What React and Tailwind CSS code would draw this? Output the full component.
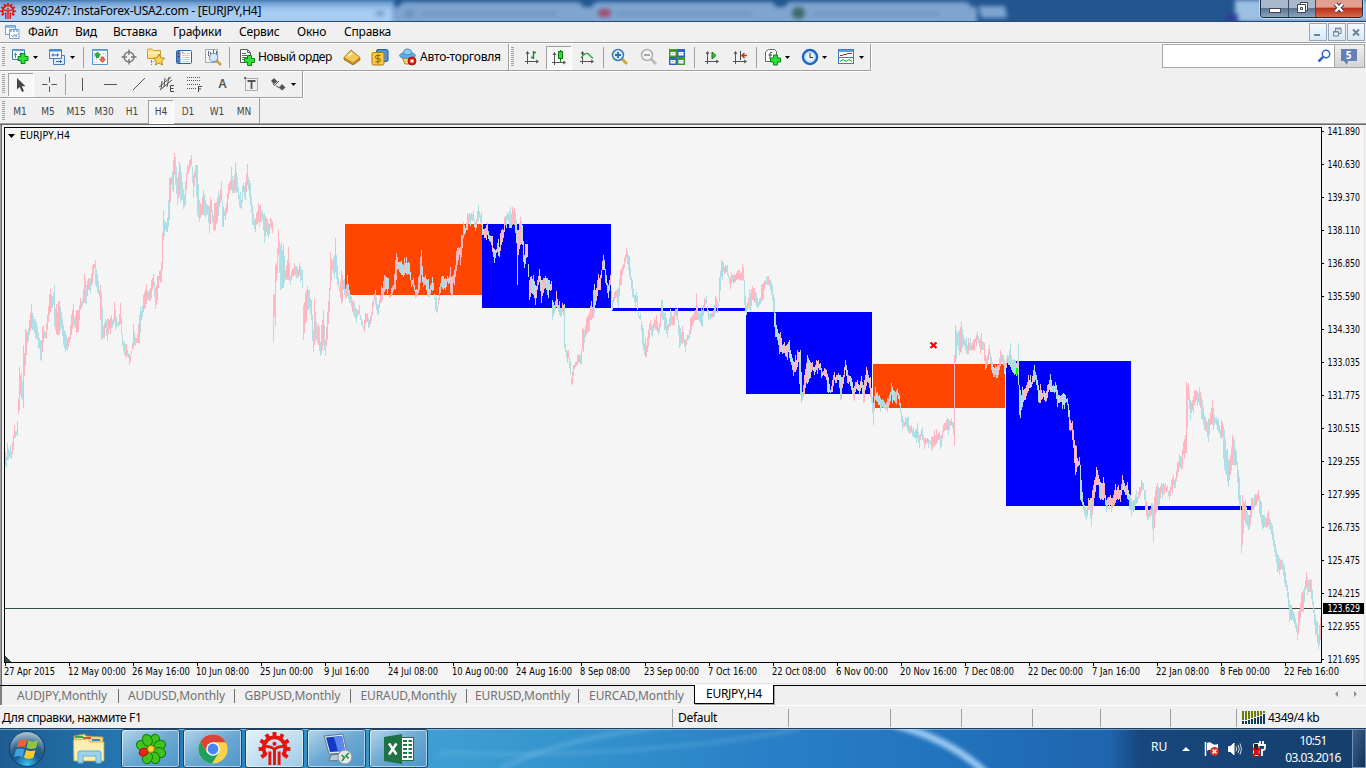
import React from 'react';

// x high low, in chart pixels
const BARS = `5 452 466,6 457 468,7 443 460,9 451 457,11 451 459,13 435 450,14 425 438,16 431 435,17 421 436,18 399 414,19 367 410,20 375 395,22 381 400,23 345 408,24 353 376,25 329 366,27 332 343,29 320 335,31 304 328,33 316 330,35 319 338,37 327 340,39 338 348,41 341 361,43 325 342,45 332 338,47 315 330,49 294 315,51 295 308,53 292 305,54 285 327,55 308 330,57 312 335,59 301 335,61 312 328,63 325 345,65 332 352,67 339 350,69 337 343,71 315 335,73 304 325,74 318 327,76 310 333,78 310 332,80 298 310,82 299 306,84 274 303,86 285 304,88 278 290,90 278 293,92 266 283,94 264 268,95 260 285,97 274 293,99 290 297,101 292 340,103 326 338,105 319 328,107 318 341,109 320 329,111 315 328,113 318 325,114 302 322,116 317 327,118 322 327,120 303 324,122 334 346,124 342 355,126 344 358,128 353 358,130 355 362,132 343 350,133 324 348,135 337 346,137 334 343,139 315 343,141 311 320,143 295 312,145 289 308,147 291 300,149 290 301,151 280 298,153 274 286,155 288 309,157 276 300,159 271 280,161 262 283,162 233 270,163 211 240,165 222 230,167 218 232,169 178 220,171 177 185,173 160 192,174 153 175,175 157 185,177 178 205,179 162 195,180 165 202,182 182 200,184 195 207,185 182 205,187 165 175,189 160 170,191 155 165,193 175 198,195 165 178,197 165 215,199 200 222,201 205 215,203 190 214,205 200 218,207 205 215,209 206 233,211 200 212,213 215 230,215 203 230,217 198 222,219 195 207,221 181 200,222 200 227,224 211 216,226 203 214,228 184 199,230 180 190,231 167 190,233 180 193,235 163 191,237 177 192,239 195 207,241 200 209,243 183 192,245 182 200,247 164 185,248 177 190,250 183 205,252 205 225,254 220 229,256 213 225,258 203 222,260 205 222,262 210 220,264 213 243,266 218 232,268 223 238,270 218 227,272 221 233,273 294 343,274 295 317,275 265 326,276 263 281,278 230 255,280 245 290,282 250 288,283 244 288,285 270 280,287 260 280,288 247 280,290 276 285,292 268 277,294 263 275,296 266 278,298 270 277,299 263 275,302 270 288,303 305 340,305 293 323,307 286 310,309 290 308,311 300 320,313 330 352,314 299 345,316 322 340,318 324 345,320 342 356,322 320 350,323 310 345,325 340 356,327 312 340,329 288 312,330 252 290,332 260 270,334 255 278,335 238 272,337 265 285,339 286 292,341 270 304,343 280 290,345 289 298,347 275 296,349 290 303,351 296 307,353 300 315,355 308 319,357 310 317,359 305 315,361 318 325,363 326 329,365 313 325,367 313 322,368 318 328,370 316 324,372 302 315,374 294 300,376 297 310,378 305 315,380 295 303,382 288 300,384 275 292,386 277 289,388 278 289,389 295 298,391 288 296,393 285 291,395 260 290,397 257 270,399 262 272,401 260 275,403 265 277,405 263 273,407 263 275,409 263 275,411 280 287,413 278 287,415 290 298,417 290 296,419 275 290,421 250 275,423 277 287,425 275 285,427 280 296,429 289 297,431 283 290,433 283 290,435 298 310,437 306 313,439 287 300,441 277 287,443 276 290,445 278 290,447 276 282,449 276 283,450 267 293,451 277 297,453 275 283,455 265 277,457 248 265,459 248 255,460 247 265,462 235 248,463 222 238,465 228 233,467 213 230,469 213 222,471 213 220,473 211 220,475 222 231,477 211 222,479 211 218,481 212 225,482 224 235,484 229 238,486 225 240,487 223 235,489 235 241,491 236 245,493 248 257,495 250 258,497 243 252,499 247 257,501 230 245,503 230 238,505 216 225,507 212 220,509 211 228,511 214 228,512 207 225,514 208 225,516 220 243,517 230 285,518 230 255,520 217 245,522 225 245,524 255 268,526 244 258,527 244 257,529 280 300,531 276 293,533 275 295,535 285 305,537 280 290,539 269 282,541 280 303,543 278 293,545 276 288,547 278 295,549 280 290,551 281 290,552 300 320,554 305 313,556 291 307,558 305 312,560 308 317,562 303 312,563 305 315,564 304 348,565 344 352,566 350 358,568 350 358,570 361 375,571 378 384,573 365 375,575 362 367,577 355 365,579 354 362,581 350 364,582 328 350,584 330 343,586 318 335,588 315 332,590 306 320,592 307 318,593 290 318,595 290 305,597 280 296,598 274 290,600 275 290,602 261 270,604 260 270,606 275 285,608 285 298,610 275 285,612 300 310,614 292 300,616 290 297,618 288 308,620 270 285,622 266 275,624 258 268,626 248 258,628 255 270,630 268 280,632 280 297,634 295 302,636 292 302,638 312 317,640 313 320,642 325 345,644 343 355,646 345 357,648 330 347,650 320 330,652 325 337,654 318 328,656 315 330,658 327 335,660 313 327,661 300 317,663 312 320,665 313 330,667 325 338,669 318 326,671 312 325,673 315 325,675 309 315,677 308 320,679 325 348,681 332 343,683 332 342,685 340 352,687 335 340,689 330 338,691 317 330,693 315 323,695 310 320,696 293 320,698 312 320,700 313 323,702 310 327,704 298 307,706 296 303,708 310 320,710 313 320,712 313 318,714 305 317,716 298 308,718 303 307,719 277 302,721 260 277,723 262 272,725 265 273,727 265 275,729 278 284,731 272 283,733 275 284,735 275 282,737 271 280,739 270 280,741 272 280,743 267 280,744 280 305,746 305 315,748 297 307,750 293 312,752 286 300,754 288 302,756 293 307,758 302 308,760 298 304,762 284 300,764 280 290,766 277 284,768 276 285,770 279 290,772 285 300,774 298 327,776 325 337,778 333 345,780 332 352,782 345 354,784 342 353,786 345 357,788 342 352,790 350 362,792 358 370,794 362 372,796 360 370,798 352 362,800 350 395,802 392 400,804 375 395,806 363 383,808 358 382,810 362 378,812 362 370,814 367 375,816 360 370,818 360 368,820 363 370,822 372 376,824 368 376,826 370 380,828 377 393,830 390 393,832 380 392,834 372 380,836 375 383,838 373 380,840 375 400,842 377 388,844 367 377,845 360 370,847 370 383,849 376 382,851 378 390,853 388 400,855 382 392,857 380 390,859 385 395,861 376 388,863 385 403,865 375 390,867 370 382,869 378 388,871 388 403,873 403 425,875 387 400,877 392 402,879 395 405,881 400 408,883 400 408,885 404 410,887 398 412,889 395 405,891 383 395,893 390 400,895 392 403,897 388 395,899 395 405,901 412 422,903 420 427,905 417 425,907 418 430,909 425 433,911 425 432,913 427 437,915 430 438,917 423 438,919 435 448,921 430 436,923 435 442,925 438 445,927 438 443,929 440 443,931 437 451,933 437 447,935 435 445,937 435 442,939 432 440,941 435 447,943 425 432,945 423 430,947 418 430,949 420 430,951 418 425,953 422 435,954 355 446,955 325 362,957 333 345,959 330 355,961 322 353,963 335 345,965 340 350,967 345 355,969 343 350,971 345 350,973 340 350,975 338 342,977 332 340,979 340 347,981 333 350,983 342 350,985 355 370,987 355 365,989 345 355,991 357 370,993 367 377,995 365 375,997 365 378,999 358 370,1001 353 362,1003 355 365,1005 363 372,1007 355 363,1009 350 365,1010 343 367,1012 360 372,1014 360 375,1017 360 374,1018 343 385,1019 385 415,1021 395 410,1023 390 402,1025 388 400,1027 382 393,1029 380 388,1031 382 387,1033 370 382,1035 372 380,1037 380 390,1039 390 403,1041 390 400,1043 390 397,1045 393 402,1047 385 398,1049 380 390,1051 380 392,1053 385 392,1055 382 392,1057 390 407,1059 395 403,1061 395 402,1063 393 405,1065 395 403,1067 398 405,1069 410 430,1071 423 430,1073 430 448,1075 445 475,1077 458 467,1079 457 465,1080 465 500,1082 492 505,1084 505 515,1086 510 520,1088 498 510,1089 500 510,1091 498 527,1092 490 515,1094 480 498,1096 467 485,1098 475 485,1100 482 500,1102 483 500,1104 483 498,1106 500 512,1108 497 505,1110 495 505,1112 498 508,1114 490 505,1116 490 500,1118 485 500,1120 490 502,1122 475 490,1124 483 492,1126 485 495,1128 490 500,1130 495 510,1133 500 512,1135 495 505,1137 497 503,1139 487 497,1141 480 492,1143 483 490,1145 490 510,1147 505 520,1149 510 517,1151 503 515,1153 505 543,1155 490 515,1157 483 510,1159 488 505,1161 483 493,1163 483 495,1165 483 490,1167 485 492,1169 490 500,1171 480 490,1173 475 485,1175 478 488,1177 462 477,1179 455 467,1181 457 470,1183 442 455,1185 435 453,1186 382 453,1188 383 400,1190 400 420,1192 400 410,1194 390 405,1196 390 400,1198 393 402,1200 392 408,1202 400 420,1204 415 430,1206 420 432,1208 418 442,1210 413 425,1212 400 425,1214 415 425,1216 417 425,1218 418 432,1220 430 438,1222 422 437,1224 430 470,1226 450 475,1228 460 487,1230 455 475,1232 435 465,1234 440 465,1236 452 465,1238 470 500,1240 495 510,1241 510 553,1242 495 545,1244 503 520,1246 507 525,1248 515 530,1250 510 525,1252 498 510,1254 495 508,1256 495 505,1258 490 500,1260 500 518,1262 515 530,1264 515 527,1266 518 528,1268 510 525,1270 520 530,1272 525 540,1274 540 552,1276 550 563,1278 555 570,1280 560 570,1282 560 570,1284 565 583,1286 580 590,1288 592 607,1289 600 622,1291 605 620,1293 612 622,1295 618 628,1297 626 640,1299 610 625,1301 593 612,1303 590 612,1305 580 590,1306 572 588,1308 580 592,1310 580 592,1312 590 605,1314 610 625,1316 620 635,1318 635 649,1320 617 640`
  .split(',')
  .map((row) => row.split(' ').map(Number));

const buildPaths = () => {
  let up = '';
  let down = '';
  BARS.forEach(([x, hi, lo], i) => {
    const next = BARS[i + 1] || [x + 1, hi, lo];
    const prev = BARS[i - 1] || [x, hi + 1, lo + 1];
    const move = hi + lo - prev[1] - prev[2];
    const rising = Math.abs(move) < 10 ? (x * 7 + hi) % 5 < 3 : move < 0;
    const seg = `M${x + 0.5} ${hi}V${lo}`;
    if (rising) up += seg;
    else down += seg;
    for (let c = x + 1; c < next[0]; c++) {
      const n = (c * 37 + hi * 11) % 13;
      const a = Math.round((hi + next[1]) / 2) + (n < 2 ? -6 : (n % 5) - 1);
      const b = Math.round((lo + next[2]) / 2) + (n > 10 ? 5 : 1 - (n % 4));
      const s = `M${c + 0.5} ${Math.min(a, b - 3)}V${b}`;
      if (n % 4 === 0 ? !rising : next[1] + next[2] < hi + lo) up += s;
      else down += s;
    }
  });
  return { up, down };
};

const paths = buildPaths();

const ZONES = [
  [345, 224, 137, 71, '#ff4500'],
  [482, 224, 129, 84, '#0000ff'],
  [612, 308, 133, 3, '#0000ff'],
  [746, 312, 126, 82, '#0000ff'],
  [873, 364, 132, 44, '#ff4500'],
  [1006, 361, 125, 145, '#0000ff'],
  [1131, 506, 121, 4, '#0000ff'],
];

const PRICES = [
  '141.890', '140.630', '139.370', '138.110', '136.850', '135.590', '134.330', '133.035', '131.775',
  '130.515', '129.255', '127.995', '126.735', '125.475', '124.215', '122.955', '121.695',
];

const DATES = [
  ['27 Apr 2015', 51], ['12 May 00:00', 58], ['26 May 16:00', 58], ['10 Jun 08:00', 53], ['25 Jun 00:00', 53],
  ['9 Jul 16:00', 45], ['24 Jul 08:00', 50], ['10 Aug 00:00', 56], ['24 Aug 16:00', 56], ['8 Sep 08:00', 50],
  ['23 Sep 00:00', 55], ['7 Oct 16:00', 49], ['22 Oct 08:00', 54], ['6 Nov 00:00', 52], ['20 Nov 16:00', 57],
  ['7 Dec 08:00', 50], ['22 Dec 00:00', 55], ['7 Jan 16:00', 48], ['22 Jan 08:00', 53], ['8 Feb 00:00', 50],
  ['22 Feb 16:00', 55],
];

const Chart = () => (
  <svg width="1366" height="560" viewBox="0 125 1366 560" className="block shrink-0 bg-[#f5f5f5]" fontFamily="'DejaVu Sans Condensed','DejaVu Sans',sans-serif" fontSize="10">
    <g shapeRendering="crispEdges">
      <rect x="0" y="125" width="1" height="560" fill="#a0a0a0" />
      <rect x="1" y="125" width="1" height="560" fill="#696969" />
      <rect x="2" y="683" width="1364" height="1" fill="#e3e3e3" />
      <rect x="1364" y="125" width="1" height="559" fill="#e3e3e3" />
      {ZONES.map(([x, y, w, h, c]) => (
        <rect key={x} x={x} y={y} width={w} height={h} fill={c} />
      ))}
      <rect x="5" y="608" width="1316" height="1" fill="#2f4f4f" />
      <path d={paths.up} stroke="#ffb6c1" />
      <path d={paths.down} stroke="#b0e0e6" />
      <path d="M1017 368V375" stroke="#00ff00" strokeWidth="2" />
      <path d="M4.500 127V662.500H1321.500V127.500H4" fill="none" stroke="#000" />
      <path d="M5 656L11 662H5Z" fill="#2f4f4f" />
      {PRICES.map((p, i) => (
        <rect key={p} x="1322" y={131 + i * 33} width="2" height="1" />
      ))}
      {DATES.map(([d], i) => (
        <rect key={d} x={5 + i * 64} y="663" width="1" height="3" />
      ))}
      <rect x="1323" y="603" width="41" height="11" fill="#000" />
    </g>
    <path d="M930.500 342.500L936.500 348M936.500 342.500L930.500 348" stroke="#f00000" strokeWidth="2.200" />
    <path d="M8 134H15L11.500 138Z" />
    <text x="20" y="139" textLength="50" lengthAdjust="spacingAndGlyphs">EURJPY,H4</text>
    {PRICES.map((p, i) => (
      <text key={p} x="1327.500" y={135 + i * 33} textLength="32.500" lengthAdjust="spacingAndGlyphs">{p}</text>
    ))}
    <text x="1327.500" y="612" fill="#fff" textLength="32.500" lengthAdjust="spacingAndGlyphs">123.629</text>
    {DATES.map(([d, w], i) => (
      <text key={d} x={4 + i * 64} y="675" textLength={w} lengthAdjust="spacingAndGlyphs">{d}</text>
    ))}
  </svg>
);

const Logo = ({ size }) => (
  <svg width={size} height={size} viewBox="0 0 32 32" fill="none" stroke="#e5140c">
    <path d="M8 22.500A10.500 10.500 0 1 1 24 22.500" strokeWidth="3.600" />
    {[-125, -94, -62, -31, 0, 31, 62, 94, 125].map((a) => (
      <path key={a} d="M16 0V5" strokeWidth="3.800" transform={`rotate(${a} 16 15.500)`} />
    ))}
    <path d="M7 14Q13 14 16 17Q19 14 25 14" strokeWidth="2.600" />
    <path d="M11.500 19V32M16 16V32M20.500 19V32" strokeWidth="2.800" />
    <circle cx="16" cy="11.500" r="2" fill="#e5140c" stroke="none" />
  </svg>
);

const Plus = ({ x = 8, y = 8 }) => (
  <path d={`M${x + 3} ${y}h4v3h3v4h-3v3h-4v-3h-3v-4h3z`} fill="#2fe03a" stroke="#078a10" />
);

const Icon = ({ children, w = 18 }) => (
  <svg width={w} height="18" viewBox={`0 0 ${w} 18`} fill="none" className="shrink-0">{children}</svg>
);

const Caret = () => (
  <svg width="5" height="3" viewBox="0 0 5 3"><path d="M0 0H5L2.500 3Z" /></svg>
);

const Slot = ({ className, children }) => (
  <div className={`flex items-center justify-center shrink-0 ${className}`}>{children}</div>
);

const Grip = ({ className = 'w-[9px]' }) => (
  <div className={`shrink-0 pl-[2px] flex items-center ${className}`}>
    <div className="w-[3px] h-5 bg-[repeating-linear-gradient(to_bottom,#a0a0a0_0,#a0a0a0_1px,#f0f0f0_1px,#f0f0f0_2px)]" />
  </div>
);

const Sep = ({ className }) => (
  <Slot className={className}><div className="w-px h-[21px] bg-[#a0a0a0]" /></Slot>
);

const Pressed = ({ className, children }) => (
  <div className={`h-[23px] flex items-center justify-center shrink-0 bg-[#f7f7f7] border-t border-l border-[#a0a0a0] shadow-[1px_1px_0_#fff] ${className}`}>
    {children}
  </div>
);

const Axes = () => (
  <path d="M4.500 4V16M2 13.500H15M3 6L4.500 3.500L6 6M13 12L15.500 13.500L13 15" stroke="#555" />
);

const OrderIcon = () => (
  <Icon>
    <path d="M2.500 1.500H9.500L12.500 4.500V14.500H2.500Z" fill="#fff" stroke="#555" />
    <path d="M4 5.500H8M4 7.500H11M4 9.500H9M4 11.500H7M9.500 2V4.500H12" stroke="#666" />
    <Plus x={6.500} y={7.500} />
  </Icon>
);

const Lens = ({ ring, fill, handle, children }) => (
  <Icon>
    <path d="M11 11L16 16" stroke={handle} strokeWidth="3" />
    <circle cx="7" cy="7" r="5.500" fill={fill} stroke={ring} strokeWidth="1.500" />
    {children}
  </Icon>
);

const MainToolbar = () => (
  <div className="flex h-[27px] w-[871px] border-r border-b border-[#a0a0a0] shadow-[1px_1px_0_#fff]">
    <Grip />
    <Slot className="w-[21px]">
      <Icon>
        <path d="M1.500 1.500H13.500V11.500H1.500Z" fill="#fff" stroke="#3c78b4" />
        <path d="M1 2H14" stroke="#5a9bd5" strokeWidth="2" />
        <path d="M4.500 4.500V10M3 6.500H6M9.500 4.500V8M8 6.500H10" stroke="#4682b4" />
        <Plus x={7} y={5.500} />
      </Icon>
    </Slot>
    <Slot className="w-[11px]"><Caret /></Slot>
    <Slot className="w-[21px] ml-[5px]">
      <Icon>
        <path d="M5.500 7.500H16.500V16.500H5.500Z" fill="#dcebfa" stroke="#4a80ba" />
        <path d="M1.500 1.500H13.500V10.500H1.500Z" fill="#eef6ff" stroke="#4a80ba" />
        <path d="M2 2.500H13" stroke="#4a90d9" strokeWidth="2" />
        <path d="M3.500 7H11M5 5.500V8.500M9.500 5.500V8.500M8 13.500H14M12.500 12V15" stroke="#3c6a9a" />
      </Icon>
    </Slot>
    <Slot className="w-[11px]"><Caret /></Slot>
    <Sep className="w-[10px]" />
    <Slot className="w-[24px]">
      <Icon>
        <path d="M1.500 1.500H16.500V16.500H1.500Z" fill="#fff" stroke="#4e94d8" />
        <path d="M2 2.500H16" stroke="#6faee8" />
        <path d="M3 5.500H5M3 8H4M3 11H7M3 14H7M12 5.500H15M14 8H15" stroke="#8ac" strokeDasharray="1 1" />
        <path d="M6.500 4L9.500 7H8V9.500H5V7H3.500Z" fill="#27b52b" stroke="#0a7a10" strokeWidth=".6" />
        <path d="M11.500 14.500L14.500 11.500H13V9H10V11.500H8.500Z" fill="#f0704a" stroke="#b8340f" strokeWidth=".6" />
      </Icon>
    </Slot>
    <Slot className="w-[34px]">
      <Icon>
        <circle cx="9" cy="9" r="5" stroke="#777" strokeWidth="1.400" />
        <path d="M9 1.500V7M9 11V16.500M1.500 9H7M11 9H16.500" stroke="#777" strokeWidth="1.400" />
      </Icon>
    </Slot>
    <Slot className="w-[20px]">
      <Icon>
        <path d="M.500 3.500V2Q.500 1 1.500 1H5L6.500 2.500H13.500V10.500H.500Z" fill="#ffe48c" stroke="#b98a16" strokeWidth=".8" />
        <path d="M1 5H13" stroke="#fff6d0" />
        <path d="M4.500 12V17M4 13.500H8" stroke="#888" strokeDasharray="1 1" />
        <path d="M12 6L13.700 9.800L17.500 10.200L14.700 13L15.500 17L12 15L8.500 17L9.300 13L6.500 10.200L10.300 9.800Z" fill="#ffd858" stroke="#b98610" />
      </Icon>
    </Slot>
    <Slot className="w-[36px]">
      <Icon>
        <rect x="1.500" y="2.500" width="15" height="13" rx="1" fill="#fff" stroke="#2b62a6" />
        <rect x="2" y="3" width="3.500" height="12" fill="#4a80c4" />
        <path d="M7 5.500H15M7 7.500H15M7 9.500H15M7 11.500H15M7 13.500H15" stroke="#bcd4ee" />
        <path d="M3 5.500H4M3 8.500H4" stroke="#222" /><path d="M7 4.500H8" stroke="#e04040" />
      </Icon>
    </Slot>
    <Slot className="w-[22px]">
      <Icon>
        <path d="M1.500 1.500H13.500V14.500H1.500Z" fill="#f4f6f8" stroke="#9aa" />
        <path d="M4.500 3V8M6.500 4V9M9.500 2V6M12.500 3V7" stroke="#667" />
        <path d="M12 12L17 17" stroke="#d0a038" strokeWidth="2.500" />
        <circle cx="9.500" cy="9.500" r="4.200" fill="#cfe6f8" fillOpacity=".8" stroke="#6a9ccb" />
      </Icon>
    </Slot>
    <Sep className="w-[11px]" />
    <Slot className="w-[23px]"><OrderIcon /></Slot>
    <div className="w-[82px] shrink-0 self-center pb-px text-[12px] leading-4 tracking-[-0.36px] whitespace-nowrap">Новый ордер</div>
    <Slot className="w-[24px]">
      <Icon>
        <path d="M1 9.500L8 2L17 9.500V12L10 17L1 11.500Z" fill="#c98a1e" stroke="#8a5a0a" strokeWidth=".7" />
        <path d="M1.500 9.500L8 2.500L16.500 9.500L10 14.500Z" fill="#f2c858" />
        <path d="M5 8L9 5" stroke="#fff0b8" strokeWidth="2" />
      </Icon>
    </Slot>
    <Slot className="w-[31px]">
      <Icon>
        <rect x="5.500" y="1.500" width="11.500" height="12" rx="1.500" fill="#4d94e0" stroke="#1f5ca8" />
        <rect x="1" y="4.500" width="12" height="12.500" rx="1.500" fill="#f6c844" stroke="#ac7d0c" />
        <path d="M9.500 7.500H6Q4.500 7.500 4.500 9T6 10.700H8Q9.500 10.700 9.500 12.200T8 13.700H4.500M7 6V15.500" stroke="#8a6410" />
      </Icon>
    </Slot>
    <Slot className="w-[25px]">
      <Icon>
        <path d="M3 9H14L12 16H6Z" fill="#f6d262" stroke="#b58c1a" />
        <ellipse cx="8.500" cy="7.500" rx="8" ry="3" fill="#67aee0" stroke="#3479b3" strokeWidth=".8" />
        <path d="M4 6Q4 1 8.500 1T13 6Q8.500 8 4 6Z" fill="#8fc8ee" stroke="#3479b3" strokeWidth=".8" />
        <circle cx="13" cy="13" r="4" fill="#e01c10" stroke="#a00" strokeWidth=".8" />
        <rect x="11.500" y="11.500" width="3" height="3" fill="#fff" />
      </Icon>
    </Slot>
    <div className="w-[88px] shrink-0 self-center pb-px text-[12px] leading-4 tracking-[-0.2px] whitespace-nowrap">Авто-торговля</div>
    <div className="w-px bg-[#a0a0a0] shadow-[1px_0_0_#fff] shrink-0" />
    <Grip />
    <Slot className="w-[28px]">
      <Icon>
        <Axes />
        <path d="M10.500 3V11M10.500 4.500H13M8 9.500H10" stroke="#178a1e" strokeWidth="1.400" />
      </Icon>
    </Slot>
    <Pressed className="w-[25px] self-center">
      <Icon>
        <Axes />
        <path d="M10.500 1V13" stroke="#0a7a12" />
        <rect x="8.500" y="2.500" width="4" height="7" fill="#2fd83a" stroke="#0a7a12" />
      </Icon>
    </Pressed>
    <Slot className="w-[31px]">
      <Icon>
        <Axes />
        <path d="M3 10Q8 3 11 6.500T15 10" stroke="#2fa838" strokeWidth="1.300" />
      </Icon>
    </Slot>
    <Sep className="w-[3px]" />
    <Slot className="w-[30px]">
      <Lens ring="#3878b8" fill="#d6ecfb" handle="#d8a82c">
        <path d="M7 4V10M4 7H10" stroke="#2b6cb0" strokeWidth="1.800" />
      </Lens>
    </Slot>
    <Slot className="w-[28px]">
      <Lens ring="#b0b0b0" fill="#f4f4f4" handle="#bcbcbc">
        <path d="M4 7H10" stroke="#a0a0a0" strokeWidth="1.800" />
      </Lens>
    </Slot>
    <Slot className="w-[28px]">
      <Icon>
        <path d="M1 1H9V9H1Z" fill="#3f9c1c" /><path d="M9 1H17V9H9Z" fill="#2e62cc" />
        <path d="M1 9H9V17H1Z" fill="#2e62cc" /><path d="M9 9H17V17H9Z" fill="#3f9c1c" />
        <path d="M2.500 4H7.500V7.500H2.500ZM10.500 4H15.500V7.500H10.500ZM2.500 12H7.500V15.500H2.500ZM10.500 12H15.500V15.500H10.500Z" fill="#fff" />
        <path d="M3.500 5.500H6.500M11.500 5.500H14.500M3.500 13.500H6.500M11.500 13.500H14.500" stroke="#bcd" />
      </Icon>
    </Slot>
    <Sep className="w-[6px]" />
    <Slot className="w-[29px]">
      <Icon><Axes /><path d="M9 4V11L13 7.500Z" fill="#2fc838" stroke="#0a7a12" /></Icon>
    </Slot>
    <Slot className="w-[28px]">
      <Icon><Axes /><path d="M9.500 3V12" stroke="#345" /><path d="M16 7.500H11M13.500 5L11 7.500L13.500 10" stroke="#c03a10" strokeWidth="1.500" /></Icon>
    </Slot>
    <Sep className="w-[4px]" />
    <Slot className="w-[20px] ml-[5px]">
      <Icon>
        <path d="M4.500 1.500H10.500L12.500 3.500V13.500H1.500V4Z" fill="#fff" stroke="#666" />
        <path d="M8 4.500Q6 3.500 6 6V11M4.500 7H8" stroke="#444" />
        <Plus x={6.500} y={7} />
      </Icon>
    </Slot>
    <Slot className="w-[9px]"><Caret /></Slot>
    <Slot className="w-[19px] ml-[8px]">
      <Icon>
        <circle cx="9" cy="9" r="7" fill="#fff" stroke="#1e66c4" strokeWidth="2.500" />
        <circle cx="9" cy="9" r="5.300" fill="#e6f2fc" stroke="#8bc4f4" />
        <path d="M9 5V9.500H12" stroke="#333" />
      </Icon>
    </Slot>
    <Slot className="w-[11px]"><Caret /></Slot>
    <Slot className="w-[20px] ml-[6px]">
      <Icon>
        <rect x="1.500" y="1.500" width="15" height="14" fill="#fff" stroke="#3c7cc4" />
        <path d="M2 3H16" stroke="#5c9ce0" strokeWidth="2" />
        <path d="M3 7.500H5L7 6.500H9L11 5.500H15" stroke="#a02818" />
        <path d="M2 9.500H16" stroke="#3c7cc4" />
        <path d="M3 13.500L6 11.500L9 13.500L12 11.500L15 13.500" stroke="#2a9a30" />
      </Icon>
    </Slot>
    <Slot className="w-[11px]"><Caret /></Slot>
  </div>
);

const LineToolbar = () => (
  <div className="flex items-center h-[27px] w-[303px] border-r border-b border-[#a0a0a0] shadow-[1px_1px_0_#fff]">
    <Grip className="w-[8px]" />
    <Pressed className="w-[25px]">
      <Icon><path d="M5 2V13.500L7.700 11L10 16L12 15L9.700 10.200H13.500Z" fill="#444" /></Icon>
    </Pressed>
    <Slot className="w-[31px]">
      <Icon><path d="M9.500 2V7.500M9.500 11.500V17M2 9.500H7.500M11.500 9.500H17" stroke="#555" /></Icon>
    </Slot>
    <Sep className="w-[3px]" />
    <Slot className="w-[31px]"><div className="w-px h-[13px] bg-[#555]" /></Slot>
    <Slot className="w-[25px]"><div className="w-[13px] h-px bg-[#555]" /></Slot>
    <Slot className="w-[31px]"><Icon><path d="M3 15L15 3" stroke="#555" /></Icon></Slot>
    <Slot className="w-[26px]">
      <Icon>
        <path d="M1 12L13 2M2 15L14 5M4 6L3 14M7 3L6 12M11 2L9 12" stroke="#555" />
        <path d="M16 10.500H12.500V16.500H16M12.500 13.500H15.500" stroke="#444" />
      </Icon>
    </Slot>
    <Slot className="w-[30px]">
      <Icon>
        <path d="M1 2.500H15M1 5.500H15M1 9.500H15M1 13.500H10" stroke="#555" strokeDasharray="1 1" />
        <path d="M12.500 17V11.500H16M12.500 14H15" stroke="#444" />
      </Icon>
    </Slot>
    <Slot className="w-[25px] text-[12px] font-semibold text-[#555]">A</Slot>
    <Slot className="w-[31px]">
      <Icon>
        <rect x="3.500" y="3.500" width="12" height="12" stroke="#666" strokeDasharray="1 1" />
        <path d="M5.500 6H13.500M9.500 6V14" stroke="#555" strokeWidth="1.800" />
        <path d="M2 2H4V4H2Z" fill="#666" />
      </Icon>
    </Slot>
    <Slot className="w-[24px]">
      <Icon>
        <path d="M5 3L8.500 6.500L5 9L2 6Z" fill="#555" />
        <path d="M13 9L16.500 12.500L13 15.500L10 12.500Z" fill="#555" />
        <path d="M4 8L5.500 10.500L10 6M7 11L11 13" stroke="#555" />
      </Icon>
    </Slot>
    <Slot className="w-[7px]"><Caret /></Slot>
  </div>
);

const PERIODS = [
  ['M1', 'w-[22px]'], ['M5', 'w-[34px]'], ['M15', 'w-[22px]'], ['M30', 'w-[34px]'], ['H1', 'w-[22px]'],
  ['H4', 'ml-[5px] w-[25px]'], ['D1', 'w-[30px]'], ['W1', 'w-[28px]'], ['MN', 'w-[26px]'],
];

const PeriodToolbar = () => (
  <div className="flex items-center h-[26px] w-[260px] border-r border-[#a0a0a0] text-[10px] text-[#444] font-['DejaVu_Sans_Condensed','DejaVu_Sans',sans-serif]">
    <Grip />
    {PERIODS.map(([name, w]) =>
      name === 'H4' ? (
        <Pressed key={name} className={w}>{name}</Pressed>
      ) : (
        <Slot key={name} className={`pt-px ${w}`}>{name}</Slot>
      )
    )}
  </div>
);

const MENU = [
  ['Файл', 'w-[47px]'], ['Вид', 'w-[38px]'], ['Вставка', 'w-[60px]'], ['Графики', 'w-[66px]'],
  ['Сервис', 'w-[58px]'], ['Окно', 'w-[47px]'], ['Справка', 'w-[60px]'],
];

const MdiButton = ({ children }) => (
  <div className="w-[18px] h-[18px] border border-[#93a8c0] bg-gradient-to-b from-[#f4f9fe] to-[#d8e8f7]">
    <svg width="16" height="16" viewBox="0 0 16 16" fill="none" stroke="#6f8296">{children}</svg>
  </div>
);

const TitleBar = () => (
  <div className="relative h-[22px] shrink-0 overflow-hidden bg-[#235690] border-b border-[#2d4a6c]">
    <div className="absolute inset-0 blur-[2px]">
      <div className="absolute left-[-6px] top-0 w-[400px] h-[25px] bg-gradient-to-b from-[#5d90c8] to-[#a6ccf2] to-40%" />
      <div className="absolute left-[392px] top-[7px] w-[585px] h-[18px] bg-[#7ea5d0]" />
      <div className="absolute left-[399px] top-[2px] w-[184px] h-[22px] bg-[#7ea5d0] rounded-t-md" />
      <div className="absolute left-[592px] top-[2px] w-[184px] h-[22px] bg-[#7ea5d0] rounded-t-md" />
      <div className="absolute left-[785px] top-[2px] w-[186px] h-[22px] bg-[#7ea5d0] rounded-t-md" />
      <div className="absolute left-[980px] top-[6px] w-[26px] h-[12px] bg-[#7ea5d0] skew-x-12" />
      <div className="absolute left-[405px] top-[9px] w-[9px] h-[9px] rounded-full bg-[#6f8fc0]" />
      <div className="absolute left-[598px] top-[9px] w-[13px] h-[8px] rounded bg-[#a04f70]" />
      <div className="absolute left-[792px] top-[7px] w-[13px] h-[12px] rounded-full bg-[#3f6a68]" />
      <div className="absolute left-[422px] top-[12px] w-[135px] h-[3px] bg-[#6a8fbc]" />
      <div className="absolute left-[617px] top-[12px] w-[135px] h-[3px] bg-[#6a8fbc]" />
      <div className="absolute left-[813px] top-[12px] w-[125px] h-[3px] bg-[#6a8fbc]" />
      <div className="absolute left-[376px] top-[11px] w-[8px] h-[5px] bg-[#7a9cc6]" />
      <div className="absolute left-[1235px] top-0 w-[140px] h-[22px] bg-[#9cbfe4]" />
      <div className="absolute left-[1226px] top-[14px] w-[12px] h-[8px] bg-[#2f3f98]" />
    </div>
    <div className="relative flex items-center h-full">
      <Logo size={16} />
      <span className="ml-[5px] text-[12px] leading-[20px] tracking-[-0.27px] text-black">8590247: InstaForex-USA2.com - [EURJPY,H4]</span>
      <div className="ml-auto mr-[3px] self-start flex w-[103px] h-[18px] rounded-b border border-t-0 border-[#1c2c44] shadow-[0_0_0_1px_#c8dcf0] overflow-hidden">
        <div className="w-[28px] border-r border-[#3a4c68] bg-gradient-to-b from-[#a9b9cc] from-45% via-[#5d7391] via-50% to-[#8ba4c0] flex items-end justify-center pb-[4px]">
          <div className="w-[12px] h-[5px] bg-white border border-[#445]" />
        </div>
        <div className="w-[27px] border-r border-[#3a4c68] bg-gradient-to-b from-[#a9b9cc] from-45% via-[#5d7391] via-50% to-[#8ba4c0] flex justify-center pt-[2px]">
          <svg width="13" height="13" viewBox="0 0 13 13" fill="none">
            <path d="M4.500 .500H11.500V8.500H4.500Z" fill="#fff" stroke="#445" />
            <path d="M1.500 2.500H9.500V10.500H1.500Z" fill="#fff" stroke="#445" />
            <path d="M4.500 5.500H6.500V7.500H4.500Z" stroke="#445" />
          </svg>
        </div>
        <div className="flex-1 bg-gradient-to-b from-[#e0a090] from-40% via-[#b8321c] via-50% to-[#d8694a] flex justify-center pt-[2px]">
          <svg width="14" height="12" viewBox="0 0 14 12">
            <path d="M3.500 2L10.500 9.500M10.500 2L3.500 9.500" stroke="#534" strokeWidth="4.500" />
            <path d="M3.500 2L10.500 9.500M10.500 2L3.500 9.500" stroke="#fff" strokeWidth="2.500" />
          </svg>
        </div>
      </div>
    </div>
  </div>
);

const MenuBar = () => (
  <div className="flex items-center h-[21px] shrink-0 border-b border-[#a0a0a0] pr-px">
    <div className="w-[28px] pl-[5px]">
      <svg width="15" height="15" viewBox="0 0 15 15" fill="#fff" stroke="#6aa2e0">
        <path d="M.5 .5H10.500V9.500H.500Z" />
        <path d="M1 2H10" strokeWidth="1.500" />
        <path d="M4.500 4.500H14V13.500H4.500Z" />
        <path d="M5 6H14" strokeWidth="1.500" strokeDasharray="2 1" />
        <path d="M6 10L8 12L9.500 9L11 12L12.500 9" fill="none" />
      </svg>
    </div>
    {MENU.map(([name, w]) => (
      <span key={name} className={`${w} shrink-0 text-[12px] leading-4 tracking-[-0.2px]`}>{name}</span>
    ))}
    <div className="ml-auto flex gap-px">
      <MdiButton><path d="M4 11H10" strokeWidth="2" /></MdiButton>
      <MdiButton>
        <path d="M6.500 7V4H12V9.500H10M6 5H12" />
        <path d="M4.500 7.500H9.500V12H4.500Z" /><path d="M4 8H10" />
      </MdiButton>
      <MdiButton><path d="M5 5.500L11 11.500M11 5.500L5 11.500" strokeWidth="2" /></MdiButton>
    </div>
  </div>
);

const TABS = [
  ['AUDJPY,Monthly', 'w-[116px]'], ['AUDUSD,Monthly', 'w-[116px]'], ['GBPUSD,Monthly', 'w-[116px]'],
  ['EURAUD,Monthly', 'w-[116px]'], ['EURUSD,Monthly', 'w-[112px]'], ['EURCAD,Monthly', 'w-[115px]'],
];

const SheetTabs = () => (
  <div className="flex h-[20px] shrink-0 border-t border-black shadow-[0_1px_0_#fff] text-[12px] leading-[17px] text-[#707070]">
    <div className="w-[2px] bg-[#808080] mr-[1px]" />
    {TABS.map(([name, w], i) => (
      <div key={name} className={`flex items-center shrink-0 ${w}`}>
        <span className={`flex-1 text-center tracking-[-0.1px] whitespace-nowrap ${i === 0 ? 'pl-[3px]' : ''}`}>{name}</span>
        {i < 5 && <div className="w-px h-[14px] bg-[#707070]" />}
      </div>
    ))}
    <div className="w-[80px] h-[19px] -mt-px bg-white border border-t-0 border-black text-black text-center shadow-[1px_1px_0_#a0a0a0] leading-[18px] tracking-[-0.3px]">EURJPY,H4</div>
    <div className="ml-auto mr-[9px] flex items-center gap-4 pb-1">
      <svg width="3" height="6" viewBox="0 0 3 6" fill="#909090"><path d="M3 0V6L0 3Z" /></svg>
      <svg width="3" height="6" viewBox="0 0 3 6" fill="#909090"><path d="M0 0V6L3 3Z" /></svg>
    </div>
  </div>
);

const StatusBar = () => (
  <div className="flex items-center h-[23px] shrink-0 pt-[2px] text-[12px] tracking-[-0.1px]">
    <div className="w-[672px] pl-[2px] tracking-[-0.38px]">Для справки, нажмите F1</div>
    <div className="w-[116px] h-[18px] border-l border-[#a0a0a0] pl-[5px] leading-[18px] tracking-[-0.3px]">Default</div>
    <div className="w-[173px] h-[18px] border-l border-[#a0a0a0] pl-[101px] flex"><div className="border-l border-[#a0a0a0]" /></div>
    <div className="w-[71px] h-[18px] border-l border-[#a0a0a0]" />
    <div className="w-[68px] h-[18px] border-l border-[#a0a0a0]" />
    <div className="w-[70px] h-[18px] border-l border-[#a0a0a0]" />
    <div className="w-[66px] h-[18px] border-l border-[#a0a0a0]" />
    <div className="flex-1 h-[18px] border-l border-[#a0a0a0] pl-[5px] flex items-center gap-[3px] whitespace-nowrap tracking-[-0.5px]">
      <svg width="23" height="13" viewBox="0 0 23 13" shapeRendering="crispEdges">
        {[10, 10, 9, 8, 7, 6, 5, 3].map((h, i) => (
          <g key={i}>
            <rect x={i * 3} y="0" width="2" height={h - 1} fill="#6a7d0a" />
            <rect x={i * 3} y={h} width="2" height={13 - h} fill="#0c3c5c" />
          </g>
        ))}
      </svg>
      4349/4 kb
    </div>
  </div>
);

const TaskButton = ({ active, children }) => (
  <div className={`w-[59px] h-[39px] mr-[3px] shrink-0 rounded-[3px] border border-[#1d4468] shadow-[inset_0_0_0_1px_rgba(255,255,255,0.55)] flex items-center justify-center ${active ? 'bg-gradient-to-br from-[#e4f2fa] to-[#9fcbe6]' : 'bg-gradient-to-br from-[#b3d5ea] via-[#6ba8d2] to-[#4d97ca]'}`}>
    {children}
  </div>
);

const Taskbar = () => (
  <div className="relative flex h-[40px] shrink-0 overflow-hidden border-t border-[#1f3f60] bg-[linear-gradient(to_right,#1d5c92_0,#2474ad_110px,#2a86c2_240px,#3f9fd4_440px,#3494cd_560px,#2a80c6_760px,#2273bd_950px,#1f64ae_1110px,#17477c_1140px,#153f6c_1366px)]">
    <svg className="absolute inset-0" width="1366" height="40" viewBox="0 0 1366 40" fill="none">
      <path d="M0 .5H1366" stroke="#a8cce8" strokeOpacity=".6" />
      <path d="M500 40Q560 8 680 -4" stroke="#8ccaf0" strokeOpacity=".3" strokeWidth="5" className="blur-[2px]" />
      <path d="M440 24Q640 30 800 0" stroke="#8ccaf0" strokeOpacity=".25" strokeWidth="4" className="blur-[2px]" />
      <path d="M895 -4Q950 10 986 44" stroke="#b0d8fa" strokeOpacity=".85" strokeWidth="7" className="blur-[2px]" />
    </svg>
    <div className="relative flex w-full">
      <div className="w-[121px] flex items-center shrink-0">
        <svg width="38" height="38" viewBox="0 0 38 38" className="ml-[8px]">
          <defs>
            <radialGradient id="orb" cx=".5" cy=".95" r=".95">
              <stop offset="0" stopColor="#37c4f4" />
              <stop offset=".4" stopColor="#175a92" />
              <stop offset=".6" stopColor="#2c5f8c" />
              <stop offset="1" stopColor="#b4cadb" />
            </radialGradient>
          </defs>
          <circle cx="19" cy="19" r="17.500" fill="url(#orb)" stroke="#123d63" />
          <path d="M11 11Q15 8 19 10L17 17.500Q13 15.500 8.500 17.500Z" fill="#ee6234" />
          <path d="M20.500 10.500Q25 13 30 10L28 18Q23 20 18.500 18Z" fill="#8cc63e" />
          <path d="M8 19.500Q12 17.500 16.500 19.500L14.500 27Q11 25 6 27Z" fill="#3fa0e4" />
          <path d="M18 20Q23 22 27.500 20L25.500 27.500Q21 30 16 27.500Z" fill="#fcc92c" />
        </svg>
        <svg width="34" height="32" viewBox="0 0 34 32" className="ml-[26px]">
          <path d="M2 3L13 1L14 3L31 4V27H2Z" fill="#f2d985" stroke="#b8963a" strokeWidth=".8" />
          <path d="M3 3H11V5H3Z" fill="#3aa54a" /><path d="M11 4H19V6H11Z" fill="#d84c38" /><path d="M20 6H28V8H20Z" fill="#3a86d0" />
          <path d="M1.500 7L16 6L18 9L32 9V28H2Z" fill="#fbeeb0" stroke="#c9aa50" strokeWidth=".8" />
          <path d="M6 30V20Q6 18 8 18H27Q29 18 29 20V30H24V23H11V30Z" fill="#9bd3ee" stroke="#62aed4" />
        </svg>
      </div>
      <TaskButton>
        <svg width="32" height="32" viewBox="0 0 32 32">
          {[22, 67, 112, 157, 202, 292, 337].map((a) => (
            <ellipse key={a} cx="16" cy="6.500" rx="4.800" ry="6" transform={`rotate(${a} 16 16)`} fill="#3fc41c" stroke="#127a08" />
          ))}
          <ellipse cx="16" cy="8" rx="3.800" ry="4.500" transform="rotate(247 16 16)" fill="#e82818" stroke="#a00" />
          <circle cx="16" cy="16" r="3.400" fill="#ffd83a" stroke="#b98b10" />
        </svg>
      </TaskButton>
      <TaskButton>
        <svg width="30" height="30" viewBox="0 0 30 30">
          <circle cx="15" cy="15" r="14.500" fill="#fcd34a" />
          <path d="M2.400 7.800A14.500 14.500 0 0 0 14 29.500L20.900 18.400L15 21L9.100 18.400Z" fill="#1fa05f" />
          <path d="M2.400 7.800A14.500 14.500 0 0 1 27.800 8.300H15L9.100 18.400Z" fill="#dc4437" />
          <circle cx="15" cy="15" r="6.800" fill="#fff" /><circle cx="15" cy="15" r="5.400" fill="#4887f2" />
        </svg>
      </TaskButton>
      <TaskButton active><Logo size={33} /></TaskButton>
      <TaskButton>
        <svg width="32" height="32" viewBox="0 0 32 32">
          <path d="M3 3L22 1L26 20L8 21Z" fill="#dce8f0" stroke="#64788a" />
          <path d="M5 4.500L21 3L24 18L9 19Z" fill="#1438c8" />
          <path d="M13 4L21 3L24 18L17 18.500Z" fill="#5b86ee" />
          <path d="M10 22L20 21L22 27L8 28Z" fill="#bcc8d2" stroke="#64788a" />
          <circle cx="24" cy="24" r="7" fill="#e4e8ea" stroke="#8a949c" />
          <path d="M20.500 22L23.500 24.500L21 28M28 20L25 22.500L27.500 25.500" fill="none" stroke="#2c8a34" strokeWidth="1.600" />
        </svg>
      </TaskButton>
      <TaskButton>
        <svg width="32" height="32" viewBox="0 0 32 32">
          <rect x="15" y="4.500" width="15.500" height="23" fill="#fff" stroke="#217346" />
          <path d="M20 8H24M25.500 8H29M20 12H24M25.500 12H29M20 16H24M25.500 16H29M20 20H24M25.500 20H29M20 24H24M25.500 24H29" stroke="#217346" strokeWidth="2" />
          <path d="M1 4L19 1V31L1 28Z" fill="#1f7244" />
          <path d="M6 10.500L13.500 21.500M13.500 10.500L6 21.500" stroke="#fff" strokeWidth="2.500" />
        </svg>
      </TaskButton>
      <div className="ml-auto flex items-center text-white">
        <span className="text-[12px] leading-4 pb-1 w-[31px]">RU</span>
        <svg width="8" height="4" viewBox="0 0 8 4" fill="#fff"><path d="M0 4L4 0L8 4Z" /></svg>
        <svg width="17" height="17" viewBox="0 0 17 17" className="ml-[13px]">
          <path d="M2.500 2V16" stroke="#fff" strokeWidth="1.500" /><path d="M4 3Q7 1.500 9 3.500T15 4V11Q12 12 9 10.500T4 11Z" fill="#fff" />
          <circle cx="11.500" cy="11.500" r="4.500" fill="#dc2c20" /><path d="M9.500 9.500L13.500 13.500M13.500 9.500L9.500 13.500" stroke="#fff" strokeWidth="1.500" />
        </svg>
        <svg width="16" height="16" viewBox="0 0 16 16" className="ml-[7px]" fill="none" stroke="#fff">
          <path d="M1.500 5.500H3.500L7 2V14L3.500 10.500H1.500Z" fill="#fff" /><path d="M9 5.500Q10.500 8 9 10.500M11 4Q13.500 8 11 12M13 2.500Q16 8 13 13.500" strokeWidth=".8" />
        </svg>
        <svg width="16" height="18" viewBox="0 0 16 18" className="ml-[8px]" fill="none">
          <path d="M3.500 3.500H8V15.500H2.500V3.500" stroke="#eee" fill="#222" /><path d="M9 4V1M12 4V1M7 5H14V8Q14 10 11 10V16" stroke="#fff" strokeWidth="1.800" />
          <path d="M2 8L9 16M9 8L2 16" stroke="#f00" strokeWidth="2.600" />
        </svg>
        <div className="w-[66px] ml-[13px] pt-px text-center text-[12px] leading-[17px] tracking-[-0.6px] flex flex-col">
          <span className="tracking-[-0.7px]">10:51</span>
          <span>03.03.2016</span>
        </div>
        <div className="ml-[6px] w-[14px] h-[39px] border border-[#7391b4] bg-gradient-to-br from-[#3f6088] to-[#12325a]" />
      </div>
    </div>
  </div>
);

const App = () => {
  return (
    <div className="w-[1366px] h-[768px] overflow-hidden flex flex-col bg-[#f0f0f0] text-black font-['Noto_Sans','Open_Sans',sans-serif]">
      <TitleBar />
      <MenuBar />
      <div className="flex shrink-0 justify-between items-start border-t border-t-white h-[82px] border-b border-b-[#696969] shadow-[inset_0_-1px_0_#a0a0a0]">
        <div className="flex flex-col">
          <MainToolbar />
          <LineToolbar />
          <PeriodToolbar />
        </div>
        <div className="flex mr-px h-[24px]">
          <div className="w-[173px] border border-[#a8a8a8] bg-white flex justify-end items-center pr-[3px]">
            <svg width="14" height="14" viewBox="0 0 14 14" fill="none" stroke="#3465c0">
              <circle cx="9" cy="5" r="3.700" strokeWidth="1.500" /><path d="M6 8L1.500 12.500" strokeWidth="2.500" />
            </svg>
          </div>
          <div className="w-[30px] border border-l-0 border-[#a8a8a8] bg-gradient-to-b from-[#f0f0f0] to-[#d4d4d4] flex items-center justify-center pr-[2px]">
            <div className="relative w-[16px] h-[12px] mb-[2px] bg-[#6480b4] text-white text-[10px] leading-[12px] font-bold text-center">
              5
              <svg className="absolute left-[3px] top-[12px]" width="5" height="4" viewBox="0 0 5 4"><path d="M0 0H4L3 4Z" fill="#6480b4" /></svg>
            </div>
          </div>
        </div>
      </div>
      <Chart />
      <SheetTabs />
      <StatusBar />
      <Taskbar />
    </div>
  );
};

export default App;
